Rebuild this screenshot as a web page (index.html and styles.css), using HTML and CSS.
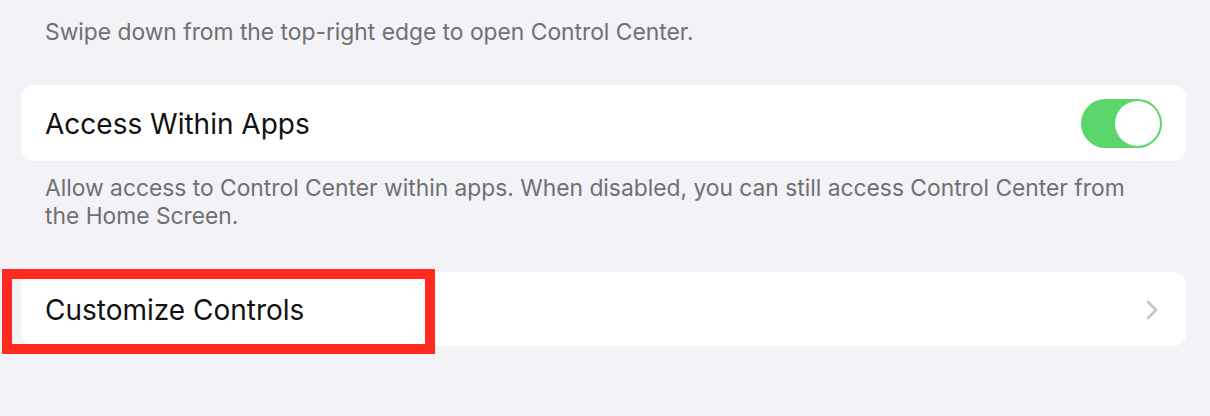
FILE: index.html
```html
<!DOCTYPE html>
<html lang="en">

<head>
    <meta charset="UTF-8">
    <meta name="viewport" content="width=device-width, initial-scale=1.0">
    <title>Control Center</title>
    <link rel="stylesheet" href="styles.css">
</head>

<body>
    <div class="page">
        <p class="note note-top">Swipe down from the top-right edge to open Control Center.</p>

        <div class="group">
            <div class="row">
                <span class="label">Access Within Apps</span>
                <span class="switch on"><span class="knob"></span></span>
            </div>
        </div>
        <p class="note">Allow access to Control Center within apps. When disabled, you can still access Control Center from the Home Screen.</p>

        <div class="group group-last">
            <div class="row row-short">
                <span class="label">Customize Controls</span>
                <svg class="chevron" width="12" height="20" viewBox="0 0 12 20">
                    <path d="M2 2 L10 10 L2 18" fill="none" stroke="#c4c4c8" stroke-width="2.6" stroke-linecap="round" stroke-linejoin="round" />
                </svg>
            </div>
            <!-- red highlight drawn over the row -->
            <div class="mark"></div>
        </div>
    </div>
</body>

</html>
```

FILE: styles.css
```css
* {
    margin: 0;
    padding: 0;
    box-sizing: border-box;
}

html,
body {
    height: 100%;
}

body {
    background: #f2f2f7;
    font-family: "Inter", "Liberation Sans", sans-serif;
    overflow: hidden;
}

.page {
    padding: 18px 24px 0 21px;
}

.note {
    color: #6f6f74;
    font-size: 22.8px;
    line-height: 28px;
    padding: 0 40px 0 24px;
    margin-top: 13px;
}

.note-top {
    margin-top: 0;
    margin-bottom: 39px;
}

.group {
    position: relative;
    background: #fff;
    border-radius: 13px;
}

.group-last {
    margin-top: 42px;
}

.row {
    height: 76px;
    display: flex;
    align-items: center;
    justify-content: space-between;
    padding: 1px 28px 0 24px;
}

.row-short {
    height: 74px;
}

.label {
    color: #111;
    font-size: 28px;
}

.switch {
    width: 81px;
    height: 49px;
    border-radius: 25px;
    background: #5ad66d;
    display: flex;
    align-items: center;
    justify-content: flex-end;
    padding: 2px;
    margin-right: -4px;
}

.knob {
    width: 45px;
    height: 45px;
    border-radius: 50%;
    background: #fff;
}

.chevron {
    display: block;
}

.mark {
    position: absolute;
    left: -19px;
    top: -3px;
    width: 433px;
    height: 85px;
    border: 10px solid #ff2a1f;
}
```
